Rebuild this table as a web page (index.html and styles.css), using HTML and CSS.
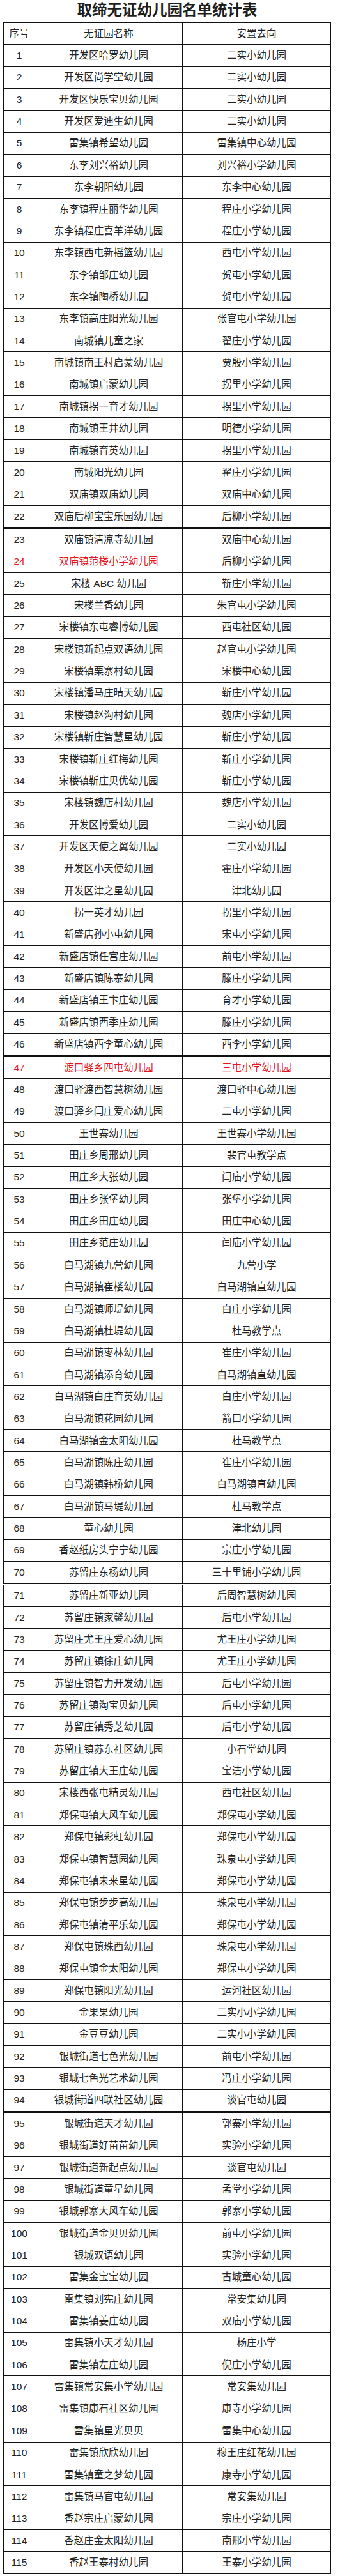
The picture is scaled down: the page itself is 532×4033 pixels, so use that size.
FILE: index.html
```html
<!DOCTYPE html>
<html lang="zh-CN">
<head>
<meta charset="utf-8">
<title>取缔无证幼儿园名单统计表</title>
<link rel="stylesheet" href="styles.css">
</head>
<body>
<div class="page">
<h1 class="title">取缔无证幼儿园名单统计表</h1>

<table class="sheet">
<colgroup><col class="c-no"><col class="c-name"><col class="c-dest"></colgroup>
<tr><td>序号</td><td>无证园名称</td><td>安置去向</td></tr>
<tr><td>1</td><td>开发区哈罗幼儿园</td><td>二实小幼儿园</td></tr>
<tr><td>2</td><td>开发区尚学堂幼儿园</td><td>二实小幼儿园</td></tr>
<tr><td>3</td><td>开发区快乐宝贝幼儿园</td><td>二实小幼儿园</td></tr>
<tr><td>4</td><td>开发区爱迪生幼儿园</td><td>二实小幼儿园</td></tr>
<tr><td>5</td><td>雷集镇希望幼儿园</td><td>雷集镇中心幼儿园</td></tr>
<tr><td>6</td><td>东李刘兴裕幼儿园</td><td>刘兴裕小学幼儿园</td></tr>
<tr><td>7</td><td>东李朝阳幼儿园</td><td>东李中心幼儿园</td></tr>
<tr><td>8</td><td>东李镇程庄丽华幼儿园</td><td>程庄小学幼儿园</td></tr>
<tr><td>9</td><td>东李镇程庄喜羊洋幼儿园</td><td>程庄小学幼儿园</td></tr>
<tr><td>10</td><td>东李镇西屯新摇篮幼儿园</td><td>西屯小学幼儿园</td></tr>
<tr><td>11</td><td>东李镇邹庄幼儿园</td><td>贺屯小学幼儿园</td></tr>
<tr><td>12</td><td>东李镇陶桥幼儿园</td><td>贺屯小学幼儿园</td></tr>
<tr><td>13</td><td>东李镇高庄阳光幼儿园</td><td>张官屯小学幼儿园</td></tr>
<tr><td>14</td><td>南城镇儿童之家</td><td>翟庄小学幼儿园</td></tr>
<tr><td>15</td><td>南城镇南王村启蒙幼儿园</td><td>贾殷小学幼儿园</td></tr>
<tr><td>16</td><td>南城镇启蒙幼儿园</td><td>拐里小学幼儿园</td></tr>
<tr><td>17</td><td>南城镇拐一育才幼儿园</td><td>拐里小学幼儿园</td></tr>
<tr><td>18</td><td>南城镇王井幼儿园</td><td>明德小学幼儿园</td></tr>
<tr><td>19</td><td>南城镇育英幼儿园</td><td>拐里小学幼儿园</td></tr>
<tr><td>20</td><td>南城阳光幼儿园</td><td>翟庄小学幼儿园</td></tr>
<tr><td>21</td><td>双庙镇双庙幼儿园</td><td>双庙中心幼儿园</td></tr>
<tr><td>22</td><td>双庙后柳宝宝乐园幼儿园</td><td>后柳小学幼儿园</td></tr>
</table>

<table class="sheet">
<colgroup><col class="c-no"><col class="c-name"><col class="c-dest"></colgroup>
<tr><td>23</td><td>双庙镇清凉寺幼儿园</td><td>双庙中心幼儿园</td></tr>
<tr><td class="red">24</td><td class="red">双庙镇范楼小学幼儿园</td><td>后柳小学幼儿园</td></tr>
<tr><td>25</td><td>宋楼 ABC 幼儿园</td><td>靳庄小学幼儿园</td></tr>
<tr><td>26</td><td>宋楼兰香幼儿园</td><td>朱官屯小学幼儿园</td></tr>
<tr><td>27</td><td>宋楼镇东屯睿博幼儿园</td><td>西屯社区幼儿园</td></tr>
<tr><td>28</td><td>宋楼镇新起点双语幼儿园</td><td>赵官屯小学幼儿园</td></tr>
<tr><td>29</td><td>宋楼镇栗寨村幼儿园</td><td>宋楼中心幼儿园</td></tr>
<tr><td>30</td><td>宋楼镇潘马庄晴天幼儿园</td><td>靳庄小学幼儿园</td></tr>
<tr><td>31</td><td>宋楼镇赵沟村幼儿园</td><td>魏店小学幼儿园</td></tr>
<tr><td>32</td><td>宋楼镇靳庄智慧星幼儿园</td><td>靳庄小学幼儿园</td></tr>
<tr><td>33</td><td>宋楼镇靳庄红梅幼儿园</td><td>靳庄小学幼儿园</td></tr>
<tr><td>34</td><td>宋楼镇靳庄贝优幼儿园</td><td>靳庄小学幼儿园</td></tr>
<tr><td>35</td><td>宋楼镇魏店村幼儿园</td><td>魏店小学幼儿园</td></tr>
<tr><td>36</td><td>开发区博爱幼儿园</td><td>二实小幼儿园</td></tr>
<tr><td>37</td><td>开发区天使之翼幼儿园</td><td>二实小幼儿园</td></tr>
<tr><td>38</td><td>开发区小天使幼儿园</td><td>霍庄小学幼儿园</td></tr>
<tr><td>39</td><td>开发区津之星幼儿园</td><td>津北幼儿园</td></tr>
<tr><td>40</td><td>拐一英才幼儿园</td><td>拐里小学幼儿园</td></tr>
<tr><td>41</td><td>新盛店孙小屯幼儿园</td><td>宋屯小学幼儿园</td></tr>
<tr><td>42</td><td>新盛店镇任宫庄幼儿园</td><td>前屯小学幼儿园</td></tr>
<tr><td>43</td><td>新盛店镇陈寨幼儿园</td><td>滕庄小学幼儿园</td></tr>
<tr><td>44</td><td>新盛店镇王卞庄幼儿园</td><td>育才小学幼儿园</td></tr>
<tr><td>45</td><td>新盛店镇西季庄幼儿园</td><td>滕庄小学幼儿园</td></tr>
<tr><td>46</td><td>新盛店镇西李童心幼儿园</td><td>西李小学幼儿园</td></tr>
</table>

<table class="sheet">
<colgroup><col class="c-no"><col class="c-name"><col class="c-dest"></colgroup>
<tr class="red"><td>47</td><td>渡口驿乡四屯幼儿园</td><td>三屯小学幼儿园</td></tr>
<tr><td>48</td><td>渡口驿渡西智慧树幼儿园</td><td>渡口驿中心幼儿园</td></tr>
<tr><td>49</td><td>渡口驿乡闫庄爱心幼儿园</td><td>二屯小学幼儿园</td></tr>
<tr><td>50</td><td>王世寨幼儿园</td><td>王世寨小学幼儿园</td></tr>
<tr><td>51</td><td>田庄乡周邢幼儿园</td><td>裴官屯教学点</td></tr>
<tr><td>52</td><td>田庄乡大张幼儿园</td><td>闫庙小学幼儿园</td></tr>
<tr><td>53</td><td>田庄乡张堡幼儿园</td><td>张堡小学幼儿园</td></tr>
<tr><td>54</td><td>田庄乡田庄幼儿园</td><td>田庄中心幼儿园</td></tr>
<tr><td>55</td><td>田庄乡范庄幼儿园</td><td>闫庙小学幼儿园</td></tr>
<tr><td>56</td><td>白马湖镇九营幼儿园</td><td>九营小学</td></tr>
<tr><td>57</td><td>白马湖镇崔楼幼儿园</td><td>白马湖镇直幼儿园</td></tr>
<tr><td>58</td><td>白马湖镇师堤幼儿园</td><td>白庄小学幼儿园</td></tr>
<tr><td>59</td><td>白马湖镇杜堤幼儿园</td><td>杜马教学点</td></tr>
<tr><td>60</td><td>白马湖镇枣林幼儿园</td><td>崔庄小学幼儿园</td></tr>
<tr><td>61</td><td>白马湖镇添育幼儿园</td><td>白马湖镇直幼儿园</td></tr>
<tr><td>62</td><td>白马湖镇白庄育英幼儿园</td><td>白庄小学幼儿园</td></tr>
<tr><td>63</td><td>白马湖镇花园幼儿园</td><td>箭口小学幼儿园</td></tr>
<tr><td>64</td><td>白马湖镇金太阳幼儿园</td><td>杜马教学点</td></tr>
<tr><td>65</td><td>白马湖镇陈庄幼儿园</td><td>崔庄小学幼儿园</td></tr>
<tr><td>66</td><td>白马湖镇韩桥幼儿园</td><td>白马湖镇直幼儿园</td></tr>
<tr><td>67</td><td>白马湖镇马堤幼儿园</td><td>杜马教学点</td></tr>
<tr><td>68</td><td>童心幼儿园</td><td>津北幼儿园</td></tr>
<tr><td>69</td><td>香赵纸房头宁宁幼儿园</td><td>宗庄小学幼儿园</td></tr>
<tr><td>70</td><td>苏留庄东杨幼儿园</td><td>三十里铺小学幼儿园</td></tr>
</table>

<table class="sheet">
<colgroup><col class="c-no"><col class="c-name"><col class="c-dest"></colgroup>
<tr><td>71</td><td>苏留庄新亚幼儿园</td><td>后周智慧树幼儿园</td></tr>
<tr><td>72</td><td>苏留庄镇家馨幼儿园</td><td>后屯小学幼儿园</td></tr>
<tr><td>73</td><td>苏留庄尤王庄爱心幼儿园</td><td>尤王庄小学幼儿园</td></tr>
<tr><td>74</td><td>苏留庄镇徐庄幼儿园</td><td>尤王庄小学幼儿园</td></tr>
<tr><td>75</td><td>苏留庄镇智力开发幼儿园</td><td>后屯小学幼儿园</td></tr>
<tr><td>76</td><td>苏留庄镇淘宝贝幼儿园</td><td>后屯小学幼儿园</td></tr>
<tr><td>77</td><td>苏留庄镇秀芝幼儿园</td><td>后屯小学幼儿园</td></tr>
<tr><td>78</td><td>苏留庄镇苏东社区幼儿园</td><td>小石堂幼儿园</td></tr>
<tr><td>79</td><td>苏留庄镇大王庄幼儿园</td><td>宝洁小学幼儿园</td></tr>
<tr><td>80</td><td>宋楼西张屯精灵幼儿园</td><td>西屯社区幼儿园</td></tr>
<tr><td>81</td><td>郑保屯镇大风车幼儿园</td><td>郑保屯小学幼儿园</td></tr>
<tr><td>82</td><td>郑保屯镇彩虹幼儿园</td><td>郑保屯小学幼儿园</td></tr>
<tr><td>83</td><td>郑保屯镇智慧园幼儿园</td><td>珠泉屯小学幼儿园</td></tr>
<tr><td>84</td><td>郑保屯镇未来星幼儿园</td><td>郑保屯小学幼儿园</td></tr>
<tr><td>85</td><td>郑保屯镇步步高幼儿园</td><td>珠泉屯小学幼儿园</td></tr>
<tr><td>86</td><td>郑保屯镇清平乐幼儿园</td><td>郑保屯小学幼儿园</td></tr>
<tr><td>87</td><td>郑保屯镇珠西幼儿园</td><td>珠泉屯小学幼儿园</td></tr>
<tr><td>88</td><td>郑保屯镇金太阳幼儿园</td><td>郑保屯小学幼儿园</td></tr>
<tr><td>89</td><td>郑保屯镇阳光幼儿园</td><td>运河社区幼儿园</td></tr>
<tr><td>90</td><td>金果果幼儿园</td><td>二实小小学幼儿园</td></tr>
<tr><td>91</td><td>金豆豆幼儿园</td><td>二实小小学幼儿园</td></tr>
<tr><td>92</td><td>银城街道七色光幼儿园</td><td>前屯小学幼儿园</td></tr>
<tr><td>93</td><td>银城七色光艺术幼儿园</td><td>冯庄小学幼儿园</td></tr>
<tr><td>94</td><td>银城街道四联社区幼儿园</td><td>谈官屯幼儿园</td></tr>
</table>

<table class="sheet">
<colgroup><col class="c-no"><col class="c-name"><col class="c-dest"></colgroup>
<tr><td>95</td><td>银城街道天才幼儿园</td><td>郭寨小学幼儿园</td></tr>
<tr><td>96</td><td>银城街道好苗苗幼儿园</td><td>实验小学幼儿园</td></tr>
<tr><td>97</td><td>银城街道新起点幼儿园</td><td>谈官屯幼儿园</td></tr>
<tr><td>98</td><td>银城街道童星幼儿园</td><td>孟堂小学幼儿园</td></tr>
<tr><td>99</td><td>银城郭寨大风车幼儿园</td><td>郭寨小学幼儿园</td></tr>
<tr><td>100</td><td>银城街道金贝贝幼儿园</td><td>前屯小学幼儿园</td></tr>
<tr><td>101</td><td>银城双语幼儿园</td><td>实验小学幼儿园</td></tr>
<tr><td>102</td><td>雷集金宝宝幼儿园</td><td>古城童心幼儿园</td></tr>
<tr><td>103</td><td>雷集镇刘宪庄幼儿园</td><td>常安集幼儿园</td></tr>
<tr><td>104</td><td>雷集镇姜庄幼儿园</td><td>双庙小学幼儿园</td></tr>
<tr><td>105</td><td>雷集镇小天才幼儿园</td><td>杨庄小学</td></tr>
<tr><td>106</td><td>雷集镇左庄幼儿园</td><td>倪庄小学幼儿园</td></tr>
<tr><td>107</td><td>雷集镇常安集小学幼儿园</td><td>常安集幼儿园</td></tr>
<tr><td>108</td><td>雷集镇康石社区幼儿园</td><td>康寺小学幼儿园</td></tr>
<tr><td>109</td><td>雷集镇星光贝贝</td><td>雷集中心幼儿园</td></tr>
<tr><td>110</td><td>雷集镇欣欣幼儿园</td><td>穆王庄红花幼儿园</td></tr>
<tr><td>111</td><td>雷集镇童之梦幼儿园</td><td>康寺小学幼儿园</td></tr>
<tr><td>112</td><td>雷集镇马官屯幼儿园</td><td>常安集幼儿园</td></tr>
<tr><td>113</td><td>香赵宗庄启蒙幼儿园</td><td>宗庄小学幼儿园</td></tr>
<tr><td>114</td><td>香赵庄金太阳幼儿园</td><td>南邢小学幼儿园</td></tr>
<tr><td>115</td><td>香赵王寨村幼儿园</td><td>王寨小学幼儿园</td></tr>
</table>
</div>
</body>
</html>
```
FILE: styles.css
```css
html, body {
  margin: 0;
  padding: 0;
  background: #ffffff;
}

.page {
  width: 513px;
  margin-left: 5px;
  font-family: "Liberation Sans", "Noto Sans CJK SC", sans-serif;
  color: #222222;
}

.title {
  margin: 0;
  height: 35px;
  line-height: 28px;
  font-size: 23.5px;
  font-weight: 700;
  text-align: center;
  letter-spacing: 0;
  font-family: "Noto Sans CJK SC", sans-serif;
  color: #1e1e1e;
}

.sheet {
  width: 100%;
  table-layout: fixed;
  border-collapse: collapse;
  margin: 0 0 1px 0;
}

.c-no { width: 49px; }
.c-name { width: 231px; }

.sheet tr {
  height: 34.36px;
}

.sheet td {
  border: 1px solid #111111;
  padding: 0;
  text-align: center;
  vertical-align: middle;
  font-size: 15.5px;
  line-height: 18px;
  white-space: nowrap;
}

.red,
.red td {
  color: #e8141e;
}
```
